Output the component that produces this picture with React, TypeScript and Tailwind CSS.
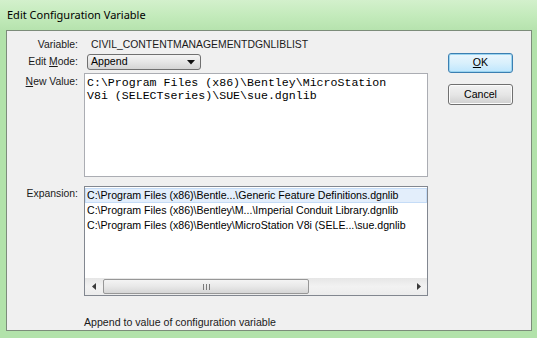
import React from "react";

const ui = { fontFamily: '"Liberation Sans", Arial, sans-serif' };
const mono = { fontFamily: '"Liberation Mono", "Courier New", monospace' };

const expansion = [
  "C:\\Program Files (x86)\\Bentle...\\Generic Feature Definitions.dgnlib",
  "C:\\Program Files (x86)\\Bentley\\M...\\Imperial Conduit Library.dgnlib",
  "C:\\Program Files (x86)\\Bentley\\MicroStation V8i (SELE...\\sue.dgnlib",
];

const Label = ({ children }: { children: React.ReactNode }) => (
  <div className="w-[71px] shrink-0 text-right text-[10.4px] leading-[16px] text-[#1a1a1a]">
    {children}
  </div>
);

const App = () => {
  return (
    <div
      className="w-[537px] h-[338px] flex flex-col bg-[#b2e2aa] overflow-hidden"
      style={ui}
    >
      {/* title bar */}
      <div className="h-[30px] shrink-0 flex items-center pl-[7px] bg-gradient-to-b from-[#d3f0cc] via-[#c4ebbc] to-[#b6e3ae]">
        <span
          className="text-[11px] text-black"
          style={{ fontFamily: '"Noto Sans", "Liberation Sans", sans-serif' }}
        >
          Edit Configuration Variable
        </span>
      </div>

      {/* client area */}
      <div className="ml-[6px] mr-[5px] h-[301px] shrink-0 border border-[#7c8c7a] bg-[#f0f0f0] flex flex-row">
        <div className="w-[421px] shrink-0 flex flex-col pt-[6px]">
          <div className="flex flex-row h-[16px] items-center">
            <Label>Variable:</Label>
            <span className="ml-[13px] text-[10.4px] text-[#1a1a1a]">
              CIVIL_CONTENTMANAGEMENTDGNLIBLIST
            </span>
          </div>

          <div className="flex flex-row mt-[1px]">
            <Label>
              Edit <span className="underline">M</span>ode:
            </Label>
            <div className="ml-[9px] w-[114px] h-[16px] rounded-[3px] border border-[#707070] bg-gradient-to-b from-[#f4f4f4] via-[#e6e6e6] to-[#d4d4d4] flex flex-row items-center pl-[3px] pr-[5px]">
              <span className="text-[10.6px] text-black grow">Append</span>
              <svg width="8" height="5" viewBox="0 0 8 5">
                <path d="M0 0 L8 0 L4 4.5 Z" fill="#111" />
              </svg>
            </div>
          </div>

          <div className="flex flex-row mt-[3px]">
            <div className="pt-[1px]">
              <Label>
                <span className="underline">N</span>ew Value:
              </Label>
            </div>
            <div
              className="ml-[6px] w-[344px] h-[104px] border border-[#abadb3] bg-white pl-[2px] pt-[2px] text-[11.6px] leading-[13px] text-black whitespace-pre"
              style={mono}
            >
              {"C:\\Program Files (x86)\\Bentley\\MicroStation\nV8i (SELECTseries)\\SUE\\sue.dgnlib"}
            </div>
          </div>

          <div className="flex flex-row mt-[9px]">
            <Label>Expansion:</Label>
            <div className="ml-[6px] w-[344px] h-[110px] border border-[#828790] bg-white flex flex-col">
              <div className="grow flex flex-col pt-[1px]">
                {expansion.map((row, i) => (
                  <div
                    key={i}
                    className={
                      i === 0
                        ? "h-[15px] border border-[#c5dcf7] bg-[#e3eefb] flex items-center pl-[1px] text-[10.6px] text-black whitespace-nowrap"
                        : "h-[15px] flex items-center pl-[2px] text-[10.6px] text-black whitespace-nowrap"
                    }
                  >
                    {row}
                  </div>
                ))}
              </div>
              {/* horizontal scrollbar */}
              <div className="h-[17px] shrink-0 flex flex-row items-center bg-gradient-to-b from-[#e6e6e6] via-[#f2f2f2] to-[#ececec]">
                <div className="w-[17px] h-full flex items-center justify-center">
                  <svg width="4" height="7" viewBox="0 0 4 7">
                    <path d="M4 0 L0 3.5 L4 7 Z" fill="#3a3a3a" />
                  </svg>
                </div>
                <div className="ml-[1px] w-[206px] h-[15px] rounded-[2px] border border-[#979797] bg-gradient-to-b from-[#f4f4f4] via-[#e8e8e8] to-[#d6d6d6] flex items-center justify-center">
                  <div className="flex flex-row gap-[2px]">
                    <div className="w-[1px] h-[6px] bg-[#7a7a7a]" />
                    <div className="w-[1px] h-[6px] bg-[#7a7a7a]" />
                    <div className="w-[1px] h-[6px] bg-[#7a7a7a]" />
                  </div>
                </div>
                <div className="grow" />
                <div className="w-[17px] h-full flex items-center justify-center">
                  <svg width="4" height="7" viewBox="0 0 4 7">
                    <path d="M0 0 L4 3.5 L0 7 Z" fill="#3a3a3a" />
                  </svg>
                </div>
              </div>
            </div>
          </div>

          <div className="mt-[18px] pl-[77px] text-[10.6px] leading-[16px] text-[#1a1a1a]">
            Append to value of configuration variable
          </div>
        </div>

        <div className="ml-[20px] pt-[22px] flex flex-col">
          <button className="w-[65px] h-[20px] rounded-[3px] border border-[#3c7fb1] bg-gradient-to-b from-[#eaf6fd] via-[#d9f0fc] to-[#bee6fd] text-[10.6px] text-black shadow-[inset_0_0_0_1px_#9ad4f0]">
            <span className="underline">O</span>K
          </button>
          <button className="mt-[11px] w-[65px] h-[21px] rounded-[3px] border border-[#707070] bg-gradient-to-b from-[#f2f2f2] via-[#e6e6e6] to-[#d0d0d0] text-[10.6px] text-black shadow-[inset_0_0_0_1px_#fcfcfc]">
            Cancel
          </button>
        </div>
      </div>
    </div>
  );
};

export default App;
